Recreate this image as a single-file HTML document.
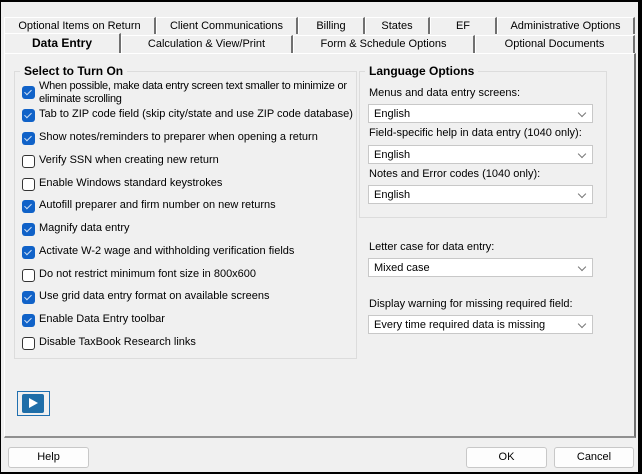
<!DOCTYPE html><html><head><style>
body{margin:0;width:642px;height:474px;background:#000;position:relative;overflow:hidden;font-family:"Liberation Sans",sans-serif;font-size:11px;color:#000}
.a{position:absolute}
#win{left:1px;top:2px;width:637px;height:470px;background:#f0f0f0}
.tab{position:absolute;height:17px;line-height:17px;text-align:center;border-right:2px solid #707070;border-top:1px solid #fff;border-left:1px solid #fff;background:#f0f0f0;white-space:nowrap;box-sizing:border-box}
.t1{top:17px}.t2{top:35px;height:18px}
#panel{left:4px;top:53px;width:629px;height:382px;border:1px solid #fff;border-right:2px solid #707070;border-bottom:2px solid #909090;background:#f0f0f0}
.grp{position:absolute;border:1px solid #dcdcdc}
.gt{position:absolute;background:#f0f0f0;font-weight:bold;font-size:12px;padding:0 4px}
.cb{position:absolute;left:22px;width:13px;height:13px;border-radius:3px;box-sizing:border-box}
.on{background:#1062c8}
.on:after{content:"";position:absolute;left:4px;top:2px;width:3px;height:6px;border:solid #cfe0f5;border-width:0 1px 1px 0;transform:rotate(45deg)}
.off{border:1px solid #333;background:#fff}
.lb{position:absolute;left:39px;white-space:nowrap}
.sel{position:absolute;left:368px;width:225px;height:19px;background:#fff;border:1px solid #c8c8c8;line-height:18px;padding-left:5px;box-sizing:border-box}
.sel:after{content:"";position:absolute;right:7px;top:5px;width:5px;height:5px;border:solid #777;border-width:0 1px 1px 0;transform:rotate(45deg)}
.rl{position:absolute;left:369px;white-space:nowrap}
.btn{position:absolute;top:447px;height:19px;background:#fdfdfd;border:1px solid #c8c8c8;border-radius:3px;text-align:center;line-height:19px}
</style></head><body>
<div id="win" class="a"></div>
<div class="tab t1" style="left:4px;width:152px">Optional Items on Return</div>
<div class="tab t1" style="left:156px;width:142px">Client Communications</div>
<div class="tab t1" style="left:298px;width:67px">Billing</div>
<div class="tab t1" style="left:365px;width:65px">States</div>
<div class="tab t1" style="left:430px;width:67px">EF</div>
<div class="tab t1" style="left:497px;width:138px">Administrative Options</div>
<div class="tab t2" style="left:4px;width:117px;font-weight:bold;font-size:12px;top:33px;height:20px;line-height:19px">Data Entry</div>
<div class="tab t2" style="left:121px;width:172px">Calculation &amp; View/Print</div>
<div class="tab t2" style="left:293px;width:182px">Form &amp; Schedule Options</div>
<div class="tab t2" style="left:475px;width:160px">Optional Documents</div>
<div id="panel" class="a"></div>
<div class="grp" style="left:14px;top:71px;width:341px;height:286px"></div>
<div class="gt" style="left:20px;top:64px">Select to Turn On</div>
<div class="cb on" style="top:86px"></div><div class="lb" style="top:80px;line-height:13px;letter-spacing:-0.25px">When possible, make data entry screen text smaller to minimize or<br>eliminate scrolling</div>
<div class="cb on" style="top:109px"></div><div class="lb" style="top:108px">Tab to ZIP code field (skip city/state and use ZIP code database)</div>
<div class="cb on" style="top:132px"></div><div class="lb" style="top:131px">Show notes/reminders to preparer when opening a return</div>
<div class="cb off" style="top:155px"></div><div class="lb" style="top:154px">Verify SSN when creating new return</div>
<div class="cb off" style="top:178px"></div><div class="lb" style="top:177px">Enable Windows standard keystrokes</div>
<div class="cb on" style="top:200px"></div><div class="lb" style="top:199px">Autofill preparer and firm number on new returns</div>
<div class="cb on" style="top:223px"></div><div class="lb" style="top:222px">Magnify data entry</div>
<div class="cb on" style="top:246px"></div><div class="lb" style="top:245px">Activate W-2 wage and withholding verification fields</div>
<div class="cb off" style="top:269px"></div><div class="lb" style="top:268px">Do not restrict minimum font size in 800x600</div>
<div class="cb on" style="top:291px"></div><div class="lb" style="top:290px">Use grid data entry format on available screens</div>
<div class="cb on" style="top:314px"></div><div class="lb" style="top:313px">Enable Data Entry toolbar</div>
<div class="cb off" style="top:337px"></div><div class="lb" style="top:336px">Disable TaxBook Research links</div>
<div class="grp" style="left:359px;top:71px;width:246px;height:145px"></div>
<div class="gt" style="left:365px;top:64px">Language Options</div>
<div class="rl" style="top:87px">Menus and data entry screens:</div>
<div class="sel" style="top:104px">English</div>
<div class="rl" style="top:127px">Field-specific help in data entry (1040 only):</div>
<div class="sel" style="top:145px">English</div>
<div class="rl" style="top:168px">Notes and Error codes (1040 only):</div>
<div class="sel" style="top:185px">English</div>
<div class="rl" style="top:241px">Letter case for data entry:</div>
<div class="sel" style="top:258px">Mixed case</div>
<div class="rl" style="top:298px">Display warning for missing required field:</div>
<div class="sel" style="top:315px">Every time required data is missing</div>
<div class="a" style="left:17px;top:391px;width:33px;height:25px;border:1px solid #2070b0;box-sizing:border-box;background:#f0f0f0"></div>
<div class="a" style="left:22px;top:394px;width:22px;height:19px;background:#1f6ea8;border-radius:2px"></div>
<div class="a" style="left:29px;top:398px;width:0;height:0;border-left:9px solid #fff;border-top:5.5px solid transparent;border-bottom:5.5px solid transparent"></div>
<div class="btn" style="left:8px;width:79px">Help</div>
<div class="btn" style="left:466px;width:79px">OK</div>
<div class="btn" style="left:554px;width:78px">Cancel</div>
</body></html>
